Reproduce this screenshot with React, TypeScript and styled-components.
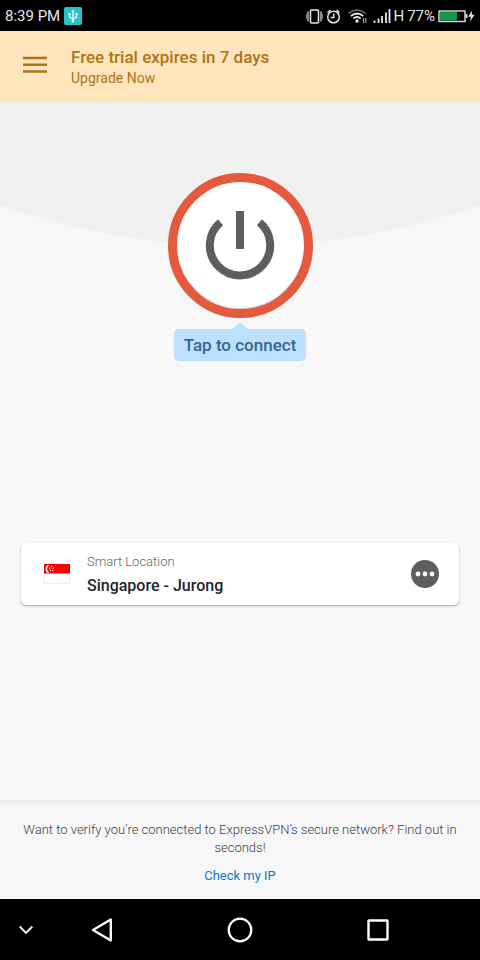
import React from "react";
import styled, { createGlobalStyle } from "styled-components";

const GlobalStyle = createGlobalStyle`
  *, *::before, *::after { box-sizing: border-box; }
  body {
    margin: 0;
    background: #f7f7f7;
    font-family: Roboto, "Liberation Sans", sans-serif;
  }
  button { font: inherit; border: 0; padding: 0; background: none; cursor: pointer; }
  svg { display: block; flex: none; }
  p, h1 { margin: 0; }
`;

const Screen = styled.div`
  display: flex;
  flex-direction: column;
  min-height: 100vh;
`;

const StatusBar = styled.header`
  display: flex;
  justify-content: space-between;
  align-items: center;
  height: 31px;
  padding: 0 5px;
  background: #000;
  color: #e6e6e6;
  font-size: 15px;
  line-height: 20px;
`;

const StatusGroup = styled.div<{ $gap: number }>`
  display: flex;
  align-items: center;
  gap: ${({ $gap }) => $gap}px;
`;

const Banner = styled.div`
  display: flex;
  align-items: center;
  gap: 24px;
  height: 71px;
  padding: 0 23px;
  background: #ffe5bc;
  color: #ad741a;
`;

const MenuButton = styled.button`
  height: 24px;
  color: #ad741a;
`;

const BannerText = styled.div`
  display: flex;
  flex-direction: column;
  align-items: flex-start;
`;

const BannerTitle = styled.h1`
  font-size: 17px;
  line-height: 22px;
  font-weight: 500;
`;

const UpgradeLink = styled.a`
  color: inherit;
  font-size: 14px;
  line-height: 20px;
  text-decoration: none;
`;

const Main = styled.main`
  position: relative;
  flex: 1;
  display: flex;
  flex-direction: column;
  align-items: center;
  padding: 71px 21px 24px;
`;

const Backdrop = styled.svg`
  position: absolute;
  inset: 0 0 auto;
  width: 100%;
  height: 144px;
`;

const PowerButton = styled.button`
  position: relative;
  display: grid;
  place-items: center;
  width: 145px;
  height: 145px;
  border: 9px solid #e5593f;
  border-radius: 50%;
  background: #fff;
  box-shadow: inset 0 -1px 1px #d0d0d0;
`;

const Hint = styled.div`
  display: flex;
  flex-direction: column;
  align-items: center;
  margin-top: 5px;
`;

const HintLabel = styled.span`
  padding: 5px 10px;
  border-radius: 5px;
  background: #bde0fe;
  color: #356792;
  font-size: 17px;
  line-height: 22px;
  font-weight: 500;
`;

const LocationCard = styled.section`
  display: flex;
  align-items: center;
  width: 100%;
  height: 62px;
  margin-top: 182px;
  padding: 0 20px 0 23px;
  border-radius: 5px;
  background: #fff;
  box-shadow: 0 1px 2px #00000055;
`;

const LocationText = styled.div`
  flex: 1;
  margin-left: 17px;
  padding-top: 2px;
`;

const LocationKind = styled.p`
  color: #666;
  font-size: 13px;
  line-height: 20px;
  font-weight: 300;
`;

const LocationName = styled.p`
  color: #22252c;
  font-size: 16px;
  line-height: 24px;
  font-weight: 500;
  padding-top: 2px;
`;

const Footer = styled.footer`
  display: flex;
  flex-direction: column;
  align-items: center;
  gap: 10px;
  padding: 21px 20px 15px;
  background: linear-gradient(#e8e8e8, #f7f7f7 8px);
  color: #3c3e46;
  font-size: 13px;
  line-height: 18px;
  font-weight: 300;
  text-align: center;
`;

const CheckLink = styled.a`
  color: #1177c5;
  font-weight: 400;
  line-height: 17px;
  text-decoration: none;
`;

const NavBar = styled.nav`
  display: grid;
  grid-template-columns: 33px 1fr 1fr 1fr;
  align-items: center;
  height: 61px;
  padding-right: 33px;
  background: #000;
`;

const NavButton = styled.button<{ $align?: "center" | "end" }>`
  display: grid;
  align-items: center;
  justify-items: ${({ $align = "center" }) => $align};
  height: 100%;
`;

const UsbIcon = () => (
  <svg width="18" height="18" viewBox="0 0 18 18" aria-hidden="true">
    <rect width="18" height="18" rx="2" fill="#25c3c6" />
    <g fill="none" stroke="#fff" strokeWidth="1.3">
      <path d="M9 4v10M5.5 7v3.2L9 12M12.500 7v3.200L9 12" />
    </g>
    <path d="M9 2.500l1.600 2.500H7.400zM4.500 6h2v2h-2zM11.500 6h2v2h-2z" fill="#fff" />
    <circle cx="9" cy="14" r="1.400" fill="#fff" />
  </svg>
);

const StatusIcons = () => (
  <svg width="86" height="20" viewBox="305 6 86 20" role="img" aria-label="Vibrate, alarm, Wi-Fi, mobile signal">
    <g fill="none" stroke="#e6e6e6">
      <rect x="310.500" y="10" width="8" height="13" rx="1" strokeWidth="1.500" />
      <path d="M308 11.500v10M321 11.500v10" stroke="#888" strokeWidth="2" />
      <path d="M306.500 14v5M322.500 14v5" stroke="#777" />
      <circle cx="333.500" cy="17" r="5.800" strokeWidth="1.500" />
      <path d="M333.800 13.500v4h-3M327.500 12.500l3-2.500M336.500 10l3 2.500" strokeWidth="1.400" />
      <path d="M348.500 13.500Q357 6.500 365.500 13.500" stroke="#777" strokeWidth="1.600" />
      <path d="M350.800 16Q357 11 363.200 16M353.300 18.500Q357 15.500 360.700 18.500" strokeWidth="1.700" />
      <path d="M363.500 18v5M365.800 18v5" stroke="#aaa" strokeWidth="1.100" />
      <path d="M374.500 20.500v2.500M378.500 18.500v4.500M382 16v7M386 12.500v10.500M389.500 9v14" strokeWidth="1.800" />
    </g>
    <circle cx="357" cy="21" r="1.700" fill="#e6e6e6" />
  </svg>
);

const BatteryIcon = () => (
  <svg width="37" height="14" viewBox="0 0 37 14" role="img" aria-label="Battery charging">
    <rect x="1" y="2" width="26" height="10.500" fill="#000" stroke="#d4d4d4" strokeWidth="1.500" />
    <rect x="2" y="3" width="17" height="8.500" fill="#13984a" />
    <path d="M27.500 5h2v4h-2z" fill="#d4d4d4" />
    <path d="M34 1.500l-3.700 6.200h2.700l-1 5 4.500-7h-2.700z" fill="#e6e6e6" />
  </svg>
);

const SingaporeFlag = () => (
  <svg width="26" height="20" viewBox="0 0 26 20" role="img" aria-label="Singapore">
    <rect x="0.500" y="0.500" width="25" height="19" fill="#fff" stroke="#ededed" />
    <path d="M0 0h26v9.500H0z" fill="#f00" />
    <path d="M5.500 1a3.900 3.900 0 1 0 0 7.800A4.400 4.400 0 0 1 5.500 1z" fill="#fff" />
    <g fill="#fff">
      <circle cx="7.500" cy="2.600" r=".7" /><circle cx="5.700" cy="4.200" r=".7" />
      <circle cx="9.300" cy="4.200" r=".7" /><circle cx="6.400" cy="6.500" r=".7" />
      <circle cx="8.700" cy="6.500" r=".7" />
    </g>
  </svg>
);

export default function App() {
  return (
    <Screen>
      <GlobalStyle />
      <StatusBar>
        <StatusGroup $gap={4}><span>8:39 PM</span><UsbIcon /></StatusGroup>
        <StatusGroup $gap={3}>
          <StatusGroup $gap={2}><StatusIcons /><span>H</span></StatusGroup>
          <span>77%</span>
          <BatteryIcon />
        </StatusGroup>
      </StatusBar>
      <Banner>
        <MenuButton aria-label="Open menu">
          <svg width="24" height="24" viewBox="0 0 24 24" stroke="currentColor" strokeWidth="2.500">
            <path d="M0 3h24M0 9.800h24M0 16.500h24" />
          </svg>
        </MenuButton>
        <BannerText>
          <BannerTitle>Free trial expires in 7 days</BannerTitle>
          <UpgradeLink href="#upgrade">Upgrade Now</UpgradeLink>
        </BannerText>
      </Banner>
      <Main>
        <Backdrop viewBox="0 0 480 144" preserveAspectRatio="none" aria-hidden="true">
          <path d="M0 0H480V103A723 723 0 0 1 0 103Z" fill="#f0f0f0" />
        </Backdrop>
        <PowerButton aria-label="Connect">
          <svg width="71" height="71" viewBox="0 0 71 71" fill="none" stroke="#5e5e5e" strokeWidth="8">
            <path d="M35 1v38M15.500 12.200A30.200 30.200 0 1 0 54.500 12.200" />
          </svg>
        </PowerButton>
        <Hint>
          <svg width="16" height="6" viewBox="0 0 16 6" aria-hidden="true">
            <path d="M0 6L7 .5Q8-.5 9 .5L16 6z" fill="#bde0fe" />
          </svg>
          <HintLabel>Tap to connect</HintLabel>
        </Hint>
        <LocationCard>
          <SingaporeFlag />
          <LocationText>
            <LocationKind>Smart Location</LocationKind>
            <LocationName>Singapore - Jurong</LocationName>
          </LocationText>
          <button aria-label="Choose location">
            <svg width="28" height="28" viewBox="0 0 28 28">
              <circle cx="14" cy="14" r="14" fill="#5e5e5e" />
              <g fill="#fff">
                <circle cx="7" cy="14" r="2.400" />
                <circle cx="14" cy="14" r="2.400" />
                <circle cx="21" cy="14" r="2.400" />
              </g>
            </svg>
          </button>
        </LocationCard>
      </Main>
      <Footer>
        <p>Want to verify you’re connected to ExpressVPN’s secure network? Find out in seconds!</p>
        <CheckLink href="#ip">Check my IP</CheckLink>
      </Footer>
      <NavBar aria-label="System navigation">
        <NavButton $align="end" aria-label="Hide navigation">
          <svg width="14" height="10" viewBox="0 0 14 10" fill="none" stroke="#fff" strokeWidth="1.800">
            <path d="M.7 1.500L7 8l6.300-6.500" />
          </svg>
        </NavButton>
        <NavButton aria-label="Back">
          <svg width="26" height="26" viewBox="0 0 26 26" fill="none" stroke="#fff" strokeWidth="2.300" strokeLinejoin="round">
            <path d="M21.800 2.500v21L4 13z" />
          </svg>
        </NavButton>
        <NavButton aria-label="Home">
          <svg width="26" height="26" viewBox="0 0 26 26" fill="none" stroke="#fff" strokeWidth="2.200">
            <circle cx="13" cy="13" r="11.300" />
          </svg>
        </NavButton>
        <NavButton aria-label="Recent apps">
          <svg width="22" height="22" viewBox="0 0 22 22" fill="none" stroke="#fff" strokeWidth="2.400">
            <rect x="1.500" y="1.500" width="19" height="19" rx=".5" />
          </svg>
        </NavButton>
      </NavBar>
    </Screen>
  );
}
